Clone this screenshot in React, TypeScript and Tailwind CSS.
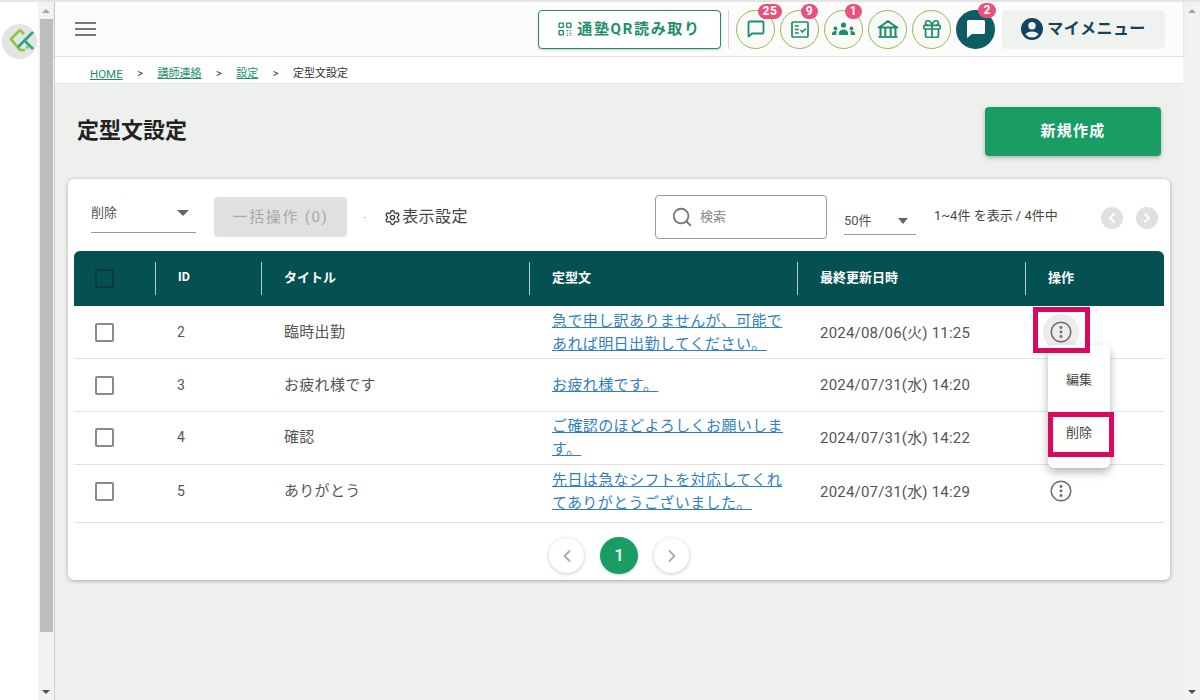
import React from "react";
import { Gift, ChevronLeft, ChevronRight, Search, Settings } from "lucide-react";

const rows = [
  { id: "2", title: "臨時出勤", body: ["急で申し訳ありませんが、可能で", "あれば明日出勤してください。"], date: "2024/08/06(火) 11:25", h: "h-[53px]", nudge: "pt-[2px]" },
  { id: "3", title: "お疲れ様です", body: ["お疲れ様です。"], date: "2024/07/31(水) 14:20", h: "h-[53px]", nudge: "" },
  { id: "4", title: "確認", body: ["ご確認のほどよろしくお願いしま", "す。"], date: "2024/07/31(水) 14:22", h: "h-[53px] pb-[1px]", nudge: "pt-[1px]" },
  { id: "5", title: "ありがとう", body: ["先日は急なシフトを対応してくれ", "てありがとうございました。"], date: "2024/07/31(水) 14:29", h: "h-[58px] pb-[5px]", nudge: "pt-[2px]" },
];

function Kebab({ active }: { active?: boolean }) {
  return (
    <div className={`flex h-[36px] w-[36px] items-center justify-center rounded-full ${active ? "bg-[#ececec]" : ""}`}>
      <svg width="22" height="22" viewBox="0 0 22 22" fill="none">
        <circle cx="11" cy="11" r="9.8" stroke="#6b6b6b" strokeWidth="1.5" />
        <circle cx="11" cy="6.5" r="1.4" fill="#6b6b6b" />
        <circle cx="11" cy="11" r="1.4" fill="#6b6b6b" />
        <circle cx="11" cy="15.5" r="1.4" fill="#6b6b6b" />
      </svg>
    </div>
  );
}

function Round({ badge, children, badgeClass }: { badge?: string; children: React.ReactNode; badgeClass?: string }) {
  return (
    <div className="relative flex h-[39px] w-[39px] items-center justify-center rounded-full border border-[#8fbc4a] bg-[#f9faf7]">
      {children}
      {badge && (
        <span className={`absolute top-[-7px] flex h-[15px] items-center justify-center rounded-full bg-[#e8517c] text-[12px] font-bold leading-none tracking-[0.5px] text-white ${badgeClass ?? ""}`}>
          {badge}
        </span>
      )}
    </div>
  );
}

function Scrollbar({ thumb, className }: { thumb?: boolean; className: string }) {
  return (
    <div className={`flex shrink-0 flex-col items-center bg-[#f1f2f1] ${className}`}>
      <div className="flex h-[17px] w-full items-center justify-center">
        <div className="h-0 w-0 border-x-[4px] border-b-[4px] border-x-transparent border-b-[#a3a3a3]" />
      </div>
      {thumb && <div className="mr-[1px] h-[613px] w-[13px] self-end bg-[#bcbdbc]" />}
      <div className="flex-1" />
      <div className="flex h-[17px] w-full items-center justify-center">
        <div className="h-0 w-0 border-x-[4px] border-t-[4px] border-x-transparent border-t-[#505050]" />
      </div>
    </div>
  );
}

export default function App() {
  return (
    <div className="flex h-[700px] w-[1200px] overflow-hidden border-t-2 border-[#e4e4e4] bg-white text-[#333] [font-family:Roboto,'Noto_Sans_CJK_JP',sans-serif]">
      <div className="w-[38px] shrink-0 bg-white pl-[2px] pt-[22px]">
        <div className="flex h-[35px] w-[35px] items-center justify-center overflow-hidden rounded-full bg-[#e4e5e3]">
          <svg width="35" height="35" viewBox="2 4 35 35" fill="none">
            <path d="M20 10 L11 19 L20 30 H25" stroke="#8cc63f" strokeWidth="2.6" />
            <path d="M20 10 L24 14" stroke="#8cc63f" strokeWidth="2.6" />
            <path d="M33 12 L18 27" stroke="#2aa876" strokeWidth="2.6" />
            <path d="M24 20 L33 29" stroke="#2aa876" strokeWidth="2.6" />
            <rect x="26" y="26" width="2.600" height="2.600" fill="#8cc63f" />
          </svg>
        </div>
      </div>
      <Scrollbar thumb className="w-[16px]" />
      <div className="relative flex min-w-0 flex-1 flex-col border-l border-[#cfd1ce] bg-[#eef0ed]">
        <header className="flex h-[55px] shrink-0 items-center justify-between border-b border-[#e2e2e2] bg-[#fcfcfc] pl-[20px] pr-[18px] shadow-[0_1px_3px_rgba(0,0,0,0.12)]">
          <div className="flex w-[21px] flex-col gap-[4px]">
            <div className="h-[2px] bg-[#777]" />
            <div className="h-[2px] bg-[#777]" />
            <div className="h-[2px] bg-[#777]" />
          </div>
          <div className="flex items-center">
            <div className="mr-[7px] flex h-[39px] w-[183px] items-center justify-center gap-[5px] rounded-[4px] border border-[#1d8f68] bg-white text-[15px] font-bold tracking-[1.700px] text-[#1d8f68] shadow-[0_1px_2px_rgba(0,0,0,0.2)]">
              <svg width="14" height="14" viewBox="0 0 13 13" fill="none" stroke="#1d8f68" strokeWidth="1.3">
                <rect x="1" y="1" width="4" height="4" rx="0.6" />
                <rect x="8" y="1" width="4" height="4" rx="0.6" />
                <rect x="1" y="8" width="4" height="4" rx="0.6" />
                <path d="M8 8h1.500M11 8h1M8 10.500h1M10.500 10.500h2M8 12.500h1.500M11 12.500h1" strokeWidth="1" />
              </svg>
              <span>通塾QR読み取り</span>
            </div>
            <div className="mr-[7px] h-[39px] w-px bg-[#d6d8d5]" />
            <div className="flex items-center gap-[5px]">
              <Round badge="25" badgeClass="left-[21px] w-[24px]">
                <svg width="18" height="18" viewBox="0 0 18 18" fill="none" stroke="#1d8f68" strokeWidth="1.800">
                  <path d="M2.500 1.500h13a1 1 0 0 1 1 1v10a1 1 0 0 1-1 1H5L1.500 16.500V2.500a1 1 0 0 1 1-1z" strokeLinejoin="round" />
                </svg>
              </Round>
              <Round badge="9" badgeClass="left-[20px] w-[17px]">
                <svg width="18" height="17" viewBox="0 0 18 17" fill="none" stroke="#1d8f68" strokeWidth="1.700">
                  <rect x="1" y="1" width="16" height="15" rx="1" />
                  <path d="M3.800 5h4M3.800 8.500h4M3.800 12h4M9.500 9l2 2 3.200-3.500" />
                </svg>
              </Round>
              <Round badge="1" badgeClass="left-[20px] w-[17px]">
                <svg width="23" height="14" viewBox="0 0 23 14" fill="#1d8f68">
                  <circle cx="11.500" cy="3" r="2.600" />
                  <path d="M7 13v-2c0-2 2.200-3.500 4.500-3.500S16 9 16 11v2z" />
                  <circle cx="3.500" cy="6.500" r="1.900" />
                  <path d="M0 13v-1.600c0-1.500 1.500-2.400 3.500-2.400.5 0 1 .1 1.400.2-.4.600-.6 1.200-.6 1.900V13z" />
                  <circle cx="19.500" cy="6.500" r="1.900" />
                  <path d="M23 13v-1.600c0-1.500-1.500-2.400-3.500-2.400-.5 0-1 .1-1.400.2.4.600.6 1.200.6 1.900V13z" />
                </svg>
              </Round>
              <Round>
                <svg width="22" height="18" viewBox="0 0 22 18" fill="none" stroke="#1d8f68" strokeWidth="1.800" strokeLinejoin="round">
                  <path d="M1.500 7.500C3.500 6.500 8 3.500 11 1c3 2.500 7.500 5.500 9.500 6.500z" />
                  <path d="M3.500 7.500V16.500M8.300 7.500V16.500M13.700 7.500V16.500M18.500 7.500V16.500" strokeWidth="2" />
                  <path d="M1.500 17h19" />
                </svg>
              </Round>
              <Round>
                <Gift size={22} color="#1d8f68" strokeWidth={1.900} />
              </Round>
              <div className="relative flex h-[39px] w-[39px] items-center justify-center rounded-full bg-[#105c63]">
                <svg width="20" height="20" viewBox="0 0 20 20" fill="#fff">
                  <path d="M2.500 1h15A1.500 1.500 0 0 1 19 2.500v11a1.500 1.500 0 0 1-1.500 1.500H6l-5 4V2.500A1.500 1.500 0 0 1 2.500 1z" />
                </svg>
                <span className="absolute left-[22px] top-[-7px] flex h-[15px] w-[18px] items-center justify-center rounded-full bg-[#e8517c] text-[12px] font-bold leading-none text-white">2</span>
              </div>
            </div>
            <div className="ml-[7px] flex h-[39px] w-[163px] items-center justify-center gap-[4px] rounded-[4px] bg-[#f0f2ef] text-[16px] font-bold tracking-[0.4px] text-[#15435f]">
              <svg width="22" height="22" viewBox="0 0 22 22" fill="#15435f">
                <path d="M11 0a11 11 0 1 0 0 22 11 11 0 0 0 0-22zm0 4a3.700 3.700 0 1 1 0 7.400A3.700 3.700 0 0 1 11 4zm0 15.500a8.500 8.500 0 0 1-6.500-3c.800-1.800 3.700-3 6.500-3s5.700 1.200 6.500 3a8.500 8.500 0 0 1-6.500 3z" />
              </svg>
              <span>マイメニュー</span>
            </div>
          </div>
        </header>

        <nav className="flex h-[27px] shrink-0 items-center border-b border-[#e4e4e4] bg-white pl-[35px] pt-[9px] text-[11px] text-[#333]">
          <a className="text-[11.500px] text-[#1d8f68] underline">HOME</a>
          <span className="mx-[14.500px]">&gt;</span>
          <a className="text-[#1d8f68] underline">講師連絡</a>
          <span className="mx-[14.500px]">&gt;</span>
          <a className="text-[#1d8f68] underline">設定</a>
          <span className="mx-[14.500px]">&gt;</span>
          <span>定型文設定</span>
        </nav>

        <div className="flex items-start justify-between pl-[22px] pr-[22px] pt-[23px]">
          <h1 className="mt-[10px] text-[22px] font-bold leading-[28px] text-[#222]">定型文設定</h1>
          <button className="flex h-[49px] w-[176px] items-center justify-center rounded-[4px] bg-[#1a9d63] text-[15px] font-bold tracking-[1.200px] text-white shadow-[0_2px_4px_rgba(0,0,0,0.25)]">新規作成</button>
        </div>

        <section className="relative ml-[13px] mt-[23px] h-[401px] w-[1102px] rounded-[6px] bg-white px-[6px] shadow-[0_1px_4px_rgba(0,0,0,0.3)]">
          <div className="flex h-[72px] items-start pl-[17px]">
            <div className="mt-[19px] flex h-[35px] w-[105px] items-center justify-between border-b border-[#999] pb-[4px] pr-[7px]">
              <span className="text-[13px] text-[#555]">削除</span>
              <div className="h-0 w-0 border-x-[6px] border-t-[6px] border-x-transparent border-t-[#666]" />
            </div>
            <div className="ml-[18px] mt-[18px] flex h-[40px] w-[133px] items-center justify-center rounded-[4px] bg-[#e0e0e0] text-[15px] tracking-[1.700px] text-[#a8a8a8]">一括操作 (0)</div>
            <span className="ml-[16px] mt-[31px] text-[12px] leading-[16px] text-[#999]">·</span>
            <div className="ml-[18px] mt-[28px] flex h-[20px] items-center gap-[1px] text-[16px] tracking-[0.45px] text-[#444]">
              <Settings size={17} color="#444" strokeWidth={2} />
              <span>表示設定</span>
            </div>
            <div className="ml-[187px] mt-[16px] flex h-[44px] w-[172px] items-center rounded-[4px] border border-[#999] pl-[15px]">
              <Search size={22} color="#777" strokeWidth={2} />
              <span className="ml-[7px] text-[13px] text-[#888]">検索</span>
            </div>
            <div className="ml-[17px] mt-[28px] flex h-[28px] w-[72px] items-center justify-between border-b border-[#999] pr-[8px]">
              <span className="text-[13px] text-[#555]">50件</span>
              <div className="h-0 w-0 border-x-[5.500px] border-t-[6px] border-x-transparent border-t-[#666]" />
            </div>
            <span className="ml-[18px] mt-[28px] text-[13px] leading-[18px] text-[#444]">1~4件 を表示 / 4件中</span>
            <div className="ml-[43px] mt-[28px] flex gap-[13px]">
              <div className="flex h-[22px] w-[22px] items-center justify-center rounded-full bg-[#e0e0e0]"><ChevronLeft size={16} color="#fff" strokeWidth={3} /></div>
              <div className="flex h-[22px] w-[22px] items-center justify-center rounded-full bg-[#e0e0e0]"><ChevronRight size={16} color="#fff" strokeWidth={3} /></div>
            </div>
          </div>

          <div className="grid h-[55px] grid-cols-[82px_106px_268px_268px_228px_138px] items-center rounded-t-[6px] bg-[#055050] text-[13px] font-bold text-white">
            <div className="flex h-[33px] items-center border-r border-[#b5c9c9] pl-[21px]">
              <div className="h-[19px] w-[19px] rounded-[2px] border-2 border-[#0c3a3c]" />
            </div>
            <div className="flex h-[33px] items-center border-r border-[#b5c9c9] pb-[2px] pl-[22px] text-[12.500px]">ID</div>
            <div className="flex h-[33px] items-center border-r border-[#b5c9c9] pb-[2px] pl-[22px]">タイトル</div>
            <div className="flex h-[33px] items-center border-r border-[#b5c9c9] pb-[2px] pl-[22px]">定型文</div>
            <div className="flex h-[33px] items-center border-r border-[#b5c9c9] pb-[2px] pl-[22px]">最終更新日時</div>
            <div className="pb-[2px] pl-[22px]">操作</div>
          </div>

          {rows.map((r, i) => (
            <div key={r.id} className={`grid grid-cols-[81px_106px_268px_268px_228px_139px] items-center text-[15px] text-[#555] ${r.h} border-b border-[#e0e0e0]`}>
              <div className="pl-[21px]">
                <div className="h-[19px] w-[19px] rounded-[2px] border-2 border-[#8a8a8a]" />
              </div>
              <div className="pl-[22px] text-[14px]">{r.id}</div>
              <div className="pl-[23px] tracking-[0.3px]">{r.title}</div>
              <div className={`pl-[23px] leading-[23px] tracking-[0.4px] text-[#2f7fc1] underline ${r.nudge}`}>
                {r.body.map((b) => (
                  <div key={b} className="whitespace-nowrap">{b}</div>
                ))}
              </div>
              <div className={`pl-[23px] tracking-[0.2px] ${r.nudge}`}>{r.date}</div>
              <div className="pl-[18px]"><Kebab active={i === 0} /></div>
            </div>
          ))}

          <div className="mt-[14px] flex items-center justify-center gap-[16px]">
            <div className="flex h-[35px] w-[35px] items-center justify-center rounded-full bg-white shadow-[0_1px_4px_rgba(0,0,0,0.22)]"><ChevronLeft size={20} color="#aaa" strokeWidth={2.200} /></div>
            <div className="flex h-[37px] w-[38px] items-center justify-center rounded-full bg-[#1a9d63] text-[17px] font-medium text-white shadow-[0_1px_3px_rgba(0,0,0,0.2)]">1</div>
            <div className="flex h-[35px] w-[35px] items-center justify-center rounded-full bg-white shadow-[0_1px_4px_rgba(0,0,0,0.22)]"><ChevronRight size={20} color="#aaa" strokeWidth={2.200} /></div>
          </div>

          <div className="absolute left-[980px] top-[166px] z-10 h-[123px] w-[62px] rounded-[6px] bg-white text-[13px] text-[#444] shadow-[0_4px_10px_rgba(0,0,0,0.3)]">
            <div className="flex h-[70px] items-center justify-center">編集</div>
            <div className="flex h-[36px] items-center justify-center">削除</div>
          </div>
          <div className="absolute left-[965px] top-[128px] z-20 h-[46px] w-[57px] border-[5px] border-[#d9095f]" />
          <div className="absolute left-[980px] top-[233px] z-20 h-[45px] w-[66px] border-[5px] border-[#d9095f]" />
        </section>
      </div>
      <Scrollbar className="w-[17px]" />
    </div>
  );
}
